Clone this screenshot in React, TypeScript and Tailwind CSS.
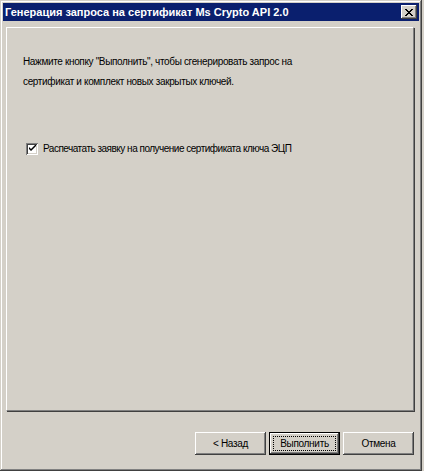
import React from 'react'

const FONT = { fontFamily: '"Liberation Sans", Arial, sans-serif' }

function WinButton({ label, isDefault }: { label: string; isDefault?: boolean }) {
  if (isDefault) {
    return (
      <div className="w-[71px] h-[23px] border border-black">
        <div className="w-full h-full bg-[#d4d0c8] shadow-[inset_-1px_-1px_#404040,inset_1px_1px_#ffffff,inset_-2px_-2px_#808080] p-[3px]">
          <div className="w-full h-full border border-dotted border-black flex items-center justify-center text-[10px] tracking-[-0.3px] text-black">
            {label}
          </div>
        </div>
      </div>
    )
  }
  return (
    <div className="w-[71px] h-[23px] bg-[#d4d0c8] shadow-[inset_-1px_-1px_#404040,inset_1px_1px_#ffffff,inset_-2px_-2px_#808080] flex items-center justify-center text-[10px] tracking-[-0.3px] text-black">
      {label}
    </div>
  )
}

export default function App() {
  return (
    <div className="w-[424px] h-[471px] bg-[#d4d0c8] overflow-hidden" style={FONT}>
      {/* Window frame */}
      <div className="w-[422px] h-[471px] bg-[#d4d0c8] shadow-[inset_-1px_-1px_#404040,inset_1px_1px_#d4d0c8,inset_-2px_-2px_#808080,inset_2px_2px_#ffffff] p-[3px] flex flex-col">
        {/* Title bar */}
        <div className="h-[18px] bg-[#0a1f6e] flex items-center justify-between pl-[2px] pr-[2px]">
          <span className="text-white font-bold text-[11px] leading-none">
            Генерация запроса на сертификат Ms Crypto API 2.0
          </span>
          <div className="w-[16px] h-[14px] bg-[#d4d0c8] shadow-[inset_-1px_-1px_#404040,inset_1px_1px_#ffffff,inset_-2px_-2px_#808080] flex items-center justify-center">
            <svg width="8" height="7" viewBox="0 0 8 7">
              <path d="M0 0h2v1h1v1h2V1h1V0h2v1H7v1H6v1H5v1h1v1h1v1h1v1H6V6H5V5H3v1H2v1H0V6h1V5h1V4h1V3H2V2H1V1H0z" fill="#000" />
            </svg>
          </div>
        </div>

        {/* Content panel */}
        <div className="ml-[3px] mt-[6px] w-[408px] h-[384px] border-t border-l border-white border-r border-b border-r-[#808080] border-b-[#808080] shadow-[1px_1px_#404040] pl-[16px] pt-[24px]">
          <p className="text-[10px] tracking-[-0.35px] text-black leading-[20px]">
            Нажмите кнопку "Выполнить", чтобы сгенерировать запрос на
            <br />
            сертификат и комплект новых закрытых ключей.
          </p>

          <label className="flex items-center gap-[5px] mt-[49px] ml-[3px] text-[10px] tracking-[-0.5px] text-black">
            <span className="w-[12px] h-[12px] bg-white shadow-[inset_1px_1px_#808080,inset_-1px_-1px_#ffffff,inset_2px_2px_#404040,inset_-2px_-2px_#d4d0c8] flex items-center justify-center">
              <svg width="7" height="7" viewBox="0 0 7 7">
                <path d="M0 2l2 2 5-5v2L2 6 0 4z" fill="#000" />
              </svg>
            </span>
            Распечатать заявку на получение сертификата ключа ЭЦП
          </label>
        </div>

        {/* Buttons */}
        <div className="flex justify-end gap-[3px] mt-[21px] pr-[5px]">
          <WinButton label="< Назад" />
          <WinButton label="Выполнить" isDefault />
          <WinButton label="Отмена" />
        </div>
      </div>
    </div>
  )
}
